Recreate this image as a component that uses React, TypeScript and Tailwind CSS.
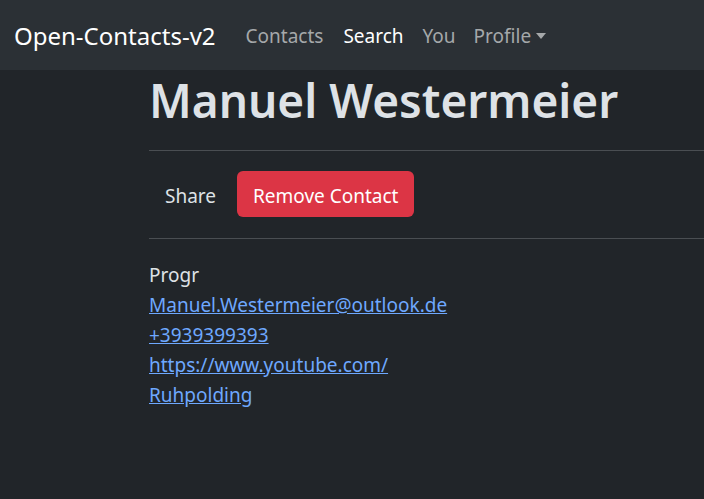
import React from "react";

export default function App() {
  const font = { fontFamily: '"Noto Sans", "Open Sans", sans-serif' };
  return (
    <div className="min-h-[499px] w-full bg-[#212529] text-[#dee2e6]" style={font}>
      <nav className="flex h-[70px] items-center bg-[#2b3035] pl-[14px] pt-[2px]">
        <span className="mr-[20px] text-[24px] leading-[1.5] text-white">Open-Contacts-v2</span>
        <div className="flex items-center text-[19px] leading-[1.5]">
          <a className="px-[10px] text-[#a5a8aa]">Contacts</a>
          <a className="px-[10px] text-white">Search</a>
          <a className="pl-[9px] pr-[10px] text-[#a5a8aa]">You</a>
          <a className="flex items-center pl-[8px] pr-[10px] text-[#a5a8aa]">
            Profile
            <span className="ml-[5px] inline-block h-0 w-0 border-x-[5px] border-t-[6px] border-x-transparent border-t-[#a5a8aa]" />
          </a>
        </div>
      </nav>
      <main className="pl-[149px]">
        <h1 className="mb-[10px] text-[46px] font-semibold leading-[60px] text-[#dee2e6]">Manuel Westermeier</h1>
        <hr className="my-[20px] border-t border-[#4a4e52]" />
        <div className="flex items-center gap-[5px]">
          <button className="flex h-[46px] items-center rounded-[6px] px-[16px] pt-[4px] text-[19px] text-[#dee2e6]">Share</button>
          <button className="flex h-[46px] items-center rounded-[6px] bg-[#dc3545] px-[16px] pt-[4px] text-[19px] text-white">Remove Contact</button>
        </div>
        <hr className="mb-[20px] mt-[21px] border-t border-[#4a4e52]" />
        <div className="flex flex-col items-start pt-[1px] text-[19px] leading-[30px]">
          <span>Progr</span>
          <a className="text-[#6ea8fe] underline">Manuel.Westermeier@outlook.de</a>
          <a className="text-[#6ea8fe] underline">+3939399393</a>
          <a className="text-[#6ea8fe] underline">https://www.youtube.com/</a>
          <a className="text-[#6ea8fe] underline">Ruhpolding</a>
        </div>
      </main>
    </div>
  );
}
